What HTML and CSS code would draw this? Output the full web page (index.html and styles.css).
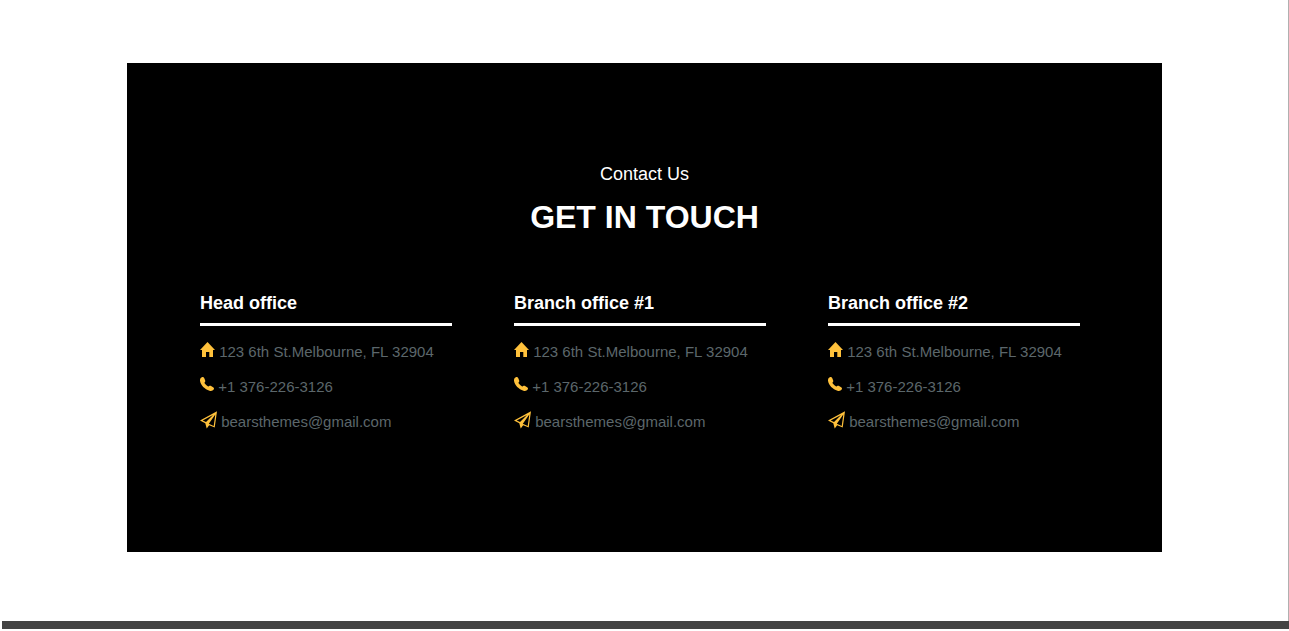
FILE: index.html
```html
<!DOCTYPE html>
<html lang="en">
<head>
<meta charset="utf-8">
<meta name="viewport" content="width=device-width, initial-scale=1">
<title>Contact Us</title>
<link rel="stylesheet" href="styles.css">
</head>
<body>
<svg class="sprite" aria-hidden="true">
  <symbol id="home" viewBox="0 0 15 15"><path d="M7.500 0 15 8h-2v7H9.300V10H6v5H2V8H0z"/></symbol>
  <symbol id="phone" viewBox="0 0 14 14"><path d="M1.800.3C2.900-.2 3.800.2 4.300 1.200l.9 2.200c.3.700 0 1.300-.5 1.800-.3.400-.2.800.1 1.300.8 1.100 1.800 2 3 2.700.5.300.9.300 1.300-.1.500-.5 1-.6 1.600-.3l2.400 1.500c.9.500 1.200 1.400.6 2.200-.9 1.300-2.400 1.700-4.200 1.200C4.700 12.300.7 8.400 0 3.800-.1 2.100.5.900 1.800.3z"/></symbol>
  <symbol id="plane" viewBox="0 0 17 18"><path fill-rule="evenodd" d="M17 .3 14.700 16.600 9.200 14.200 6.700 17.600 5.300 12.200 0 9.500zM13 3.900 2.700 9.400 6 11zM15.300 3.600 8.800 12.700 13.700 14.900z"/></symbol>
</svg>
<main class="page">
  <section class="contact">
    <header class="heading">
      <p class="subtitle">Contact Us</p>
      <h1 class="title">GET IN TOUCH</h1>
    </header>
    <div class="offices">
      <article class="office">
        <h2 class="name">Head office</h2>
        <ul class="details">
          <li><svg class="icon home"><use href="#home"/></svg> 123 6th St.Melbourne, FL 32904</li>
          <li><svg class="icon phone"><use href="#phone"/></svg> +1 376-226-3126</li>
          <li><svg class="icon plane"><use href="#plane"/></svg> bearsthemes@gmail.com</li>
        </ul>
      </article>
      <article class="office">
        <h2 class="name">Branch office #1</h2>
        <ul class="details">
          <li><svg class="icon home"><use href="#home"/></svg> 123 6th St.Melbourne, FL 32904</li>
          <li><svg class="icon phone"><use href="#phone"/></svg> +1 376-226-3126</li>
          <li><svg class="icon plane"><use href="#plane"/></svg> bearsthemes@gmail.com</li>
        </ul>
      </article>
      <article class="office">
        <h2 class="name">Branch office #2</h2>
        <ul class="details">
          <li><svg class="icon home"><use href="#home"/></svg> 123 6th St.Melbourne, FL 32904</li>
          <li><svg class="icon phone"><use href="#phone"/></svg> +1 376-226-3126</li>
          <li><svg class="icon plane"><use href="#plane"/></svg> bearsthemes@gmail.com</li>
        </ul>
      </article>
    </div>
  </section>
</main>
<footer class="bar"></footer>
</body>
</html>
```
FILE: styles.css
```css
* { box-sizing: border-box; }
body {
  margin: 0;
  background: #fff;
  font-family: "Liberation Sans", Arial, sans-serif;
}
.sprite { display: none; }
.page {
  padding: 63px 126px 69px 127px;
  border-right: 1px solid #b0b0b0;
}
.contact {
  padding: 100px 82px 113px 73px;
  background: #000;
  color: #fff;
}
.heading { text-align: center; padding-left: 9px; }
.subtitle { margin: 0; font-size: 18px; line-height: 22px; }
.title { margin: 12px 0 0; font-size: 32px; line-height: 40px; }
.offices {
  display: grid;
  grid-template-columns: repeat(auto-fit, minmax(240px, 1fr));
  gap: 62px;
  margin-top: 55px;
}
.name {
  margin: 0;
  padding-bottom: 8px;
  border-bottom: 3px solid #fff;
  font-size: 18px;
  line-height: 23px;
}
.details {
  margin: 8px 0 0;
  padding: 0;
  list-style: none;
  color: #5c676b;
  font-size: 15px;
  line-height: 35px;
}
.icon { fill: #ffc13b; }
.home { width: 15px; height: 15px; }
.phone { width: 14px; height: 14px; vertical-align: 1px; }
.plane { width: 17px; height: 18px; vertical-align: -2px; }
.bar { height: 8px; margin-left: 2px; background: #444; }
```
